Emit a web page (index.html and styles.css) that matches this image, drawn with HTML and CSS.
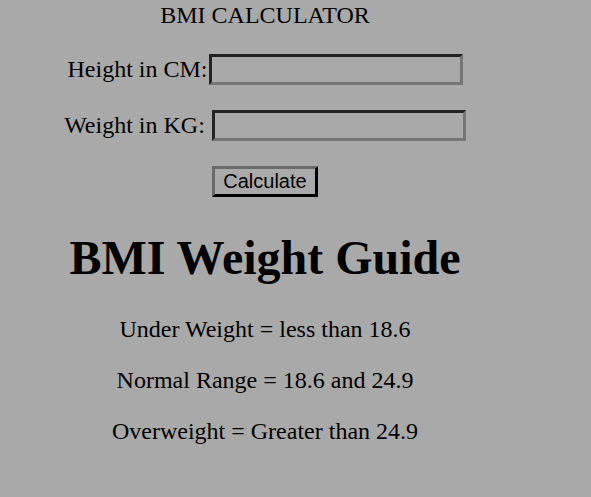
FILE: index.html
```html
<!DOCTYPE html>
<html>
<head>
<meta charset="utf-8">
<title>BMI Calculator</title>
<link rel="stylesheet" href="styles.css">
</head>
<body>
<div class="app">
  <div class="title">BMI CALCULATOR</div>
  <div class="form">
    <div class="row">
      <label class="label" for="height">Height in CM:</label>
      <input class="field" id="height" type="text">
    </div>
    <div class="row">
      <label class="label label-spaced" for="weight">Weight in KG:</label>
      <input class="field" id="weight" type="text">
    </div>
    <div class="row">
      <button class="btn" type="button">Calculate</button>
    </div>
  </div>
  <h1 class="guide-title">BMI Weight Guide</h1>
  <p class="guide-line">Under Weight = less than 18.6</p>
  <p class="guide-line">Normal Range = 18.6 and 24.9</p>
  <p class="guide-line">Overweight = Greater than 24.9</p>
</div>
</body>
</html>
```
FILE: styles.css
```css
html, body {
  margin: 0;
  padding: 0;
  background: #a9a9a9;
}
body {
  font-family: "Liberation Serif", "Times New Roman", serif;
  font-size: 24px;
  color: #000;
}
.app {
  width: 530px;
  text-align: center;
}
.title {
  margin-top: 2px;
  line-height: normal;
}
.form {
  margin-top: 25px;
  display: flex;
  flex-direction: column;
  gap: 25px;
}
.row {
  height: 31px;
  display: flex;
  justify-content: center;
  align-items: center;
}
.label {
  white-space: nowrap;
}
.label-spaced {
  margin-right: 6px;
}
.field {
  box-sizing: border-box;
  width: 254px;
  height: 31px;
  margin: 0 0 0 1px;
  padding: 0 4px;
  background: transparent;
  border-style: solid;
  border-width: 3px;
  border-color: #232323 #767676 #767676 #232323;
  font-family: "Liberation Sans", Arial, sans-serif;
  font-size: 20px;
  outline: none;
}
.btn {
  box-sizing: border-box;
  width: 106px;
  height: 31px;
  padding: 0;
  background: transparent;
  border-style: solid;
  border-width: 3px;
  border-color: #6a6a6a #000 #000 #6a6a6a;
  font-family: "Liberation Sans", Arial, sans-serif;
  font-size: 20px;
  color: #000;
}
.guide-title {
  font-size: 48px;
  font-weight: bold;
  margin: 33px 0 31px;
  line-height: normal;
}
.guide-line {
  margin: 24px 0;
  line-height: normal;
}
```
